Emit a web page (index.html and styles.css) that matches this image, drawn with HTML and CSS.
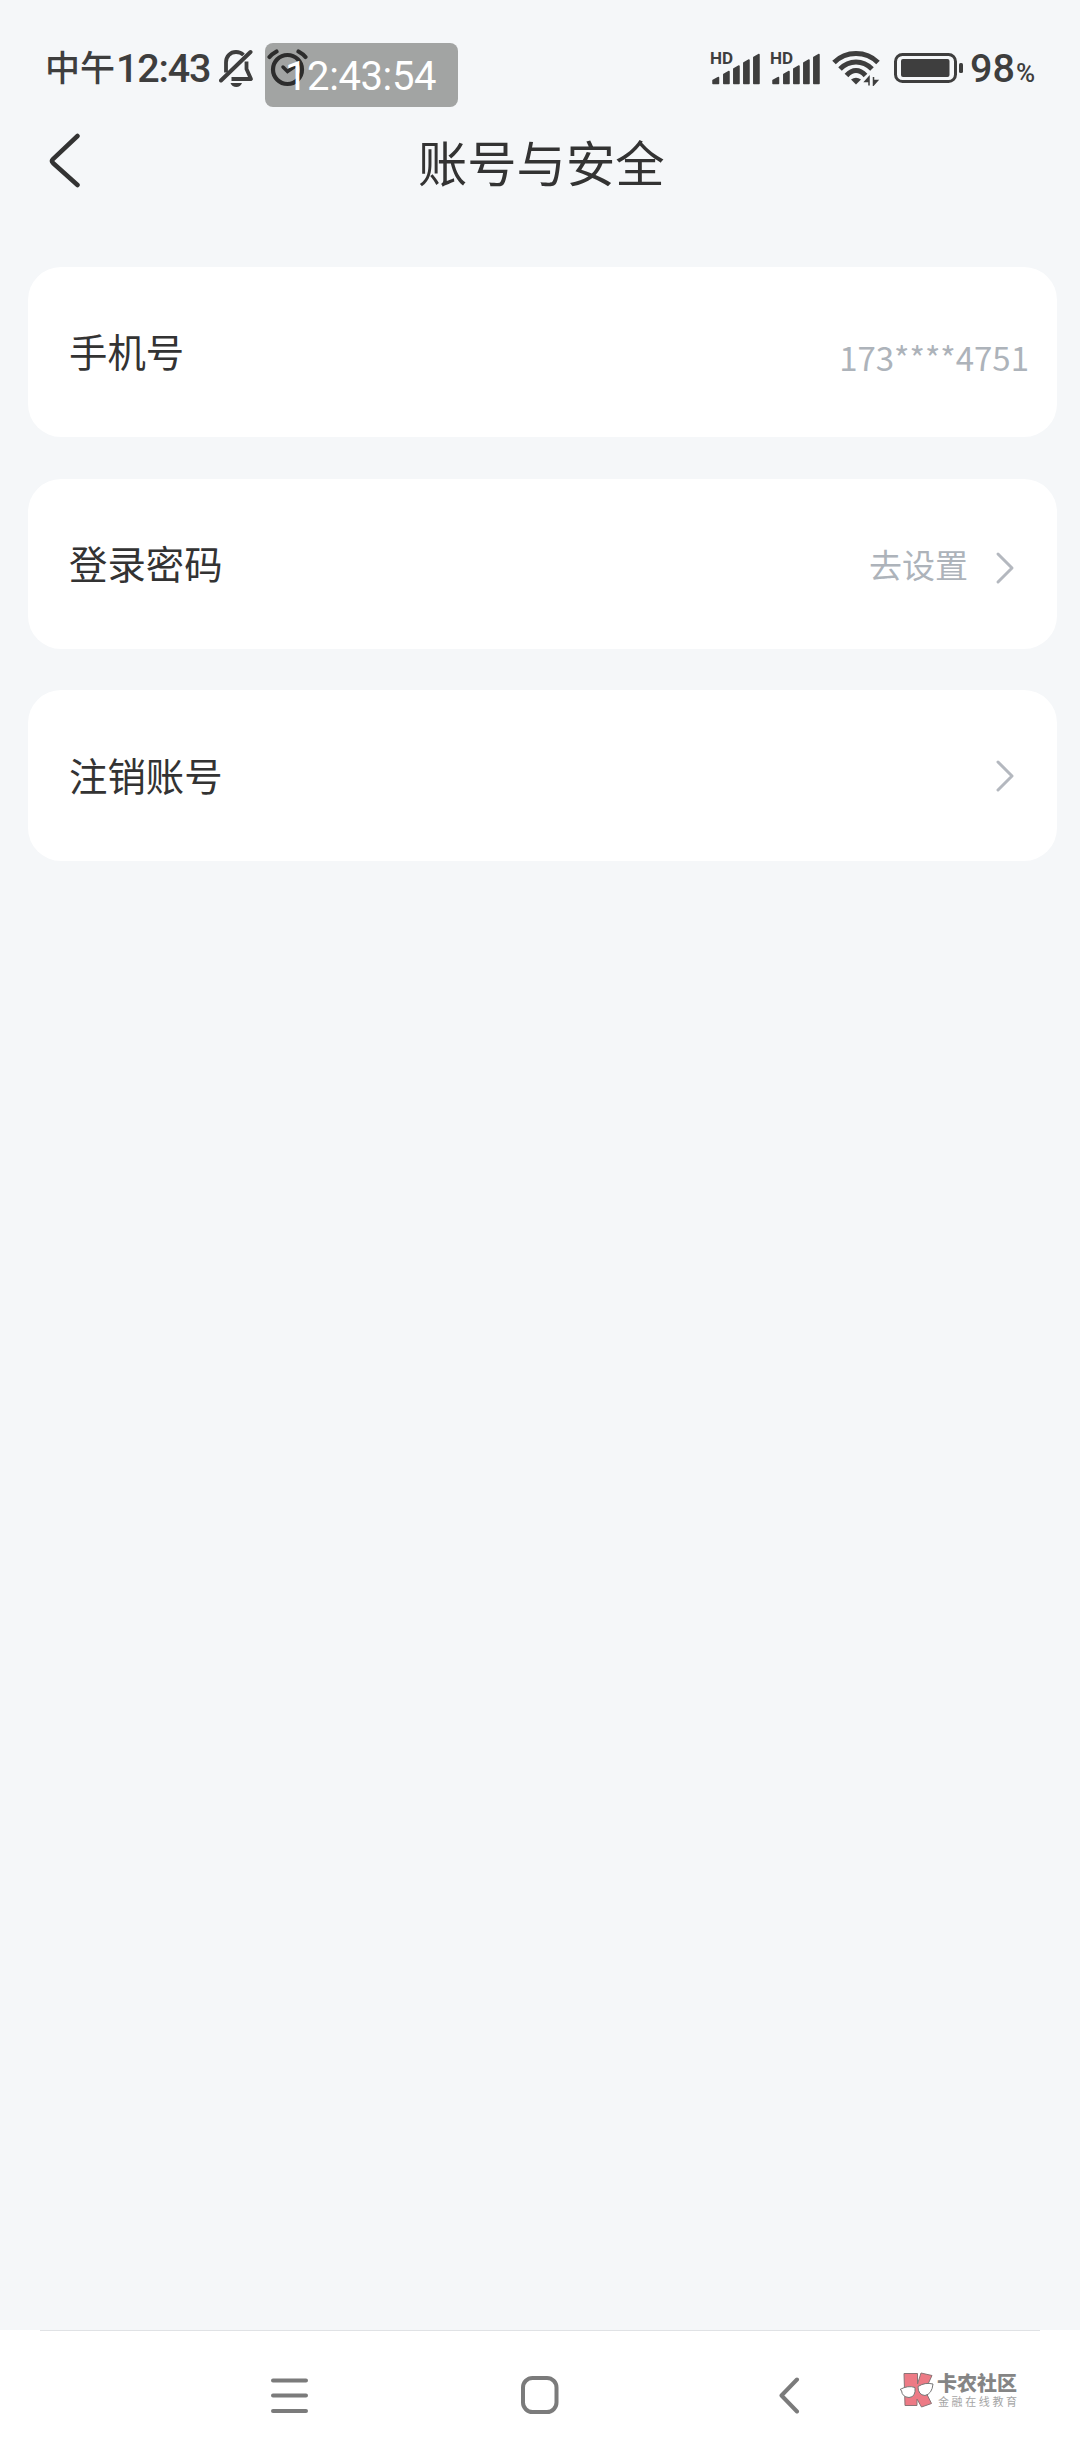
FILE: index.html
```html
<!DOCTYPE html>
<html lang="zh-CN">
	<head>
		<meta charset="utf-8" />
		<meta name="viewport" content="width=device-width, initial-scale=1" />
		<title>账号与安全</title>
		<link rel="stylesheet" href="styles.css">
	</head>

	<body>
		<div class="status-bar">
			<span class="status-period">中午</span>
			<span class="status-time">12:43</span>
			<svg class="icon-mute" width="36" height="40" viewBox="0 0 36 40">
				<g fill="none" stroke="#3e3e3e" stroke-width="3.8">
					<path d="M7 23.500V13.500C7 7 11.500 3 17 3C20 3 22.500 4 24.500 6" />
					<path d="M27.500 12.500V20L32 30H12.500" stroke-linejoin="round" />
					<path d="M2 31.500L31.500 3" stroke-linecap="round" stroke-width="4" />
				</g>
				<path d="M11.500 34H23C22 36.500 20 38 17.300 38C14.500 38 12.500 36.500 11.500 34Z" fill="#3e3e3e" />
			</svg>
			<div class="clock-badge">
				<svg class="icon-alarm" width="42" height="38" viewBox="0 0 42 38">
					<g fill="none" stroke="#2c2c2c" stroke-width="4.2" stroke-linecap="round">
						<circle cx="21.500" cy="20.500" r="14.500" />
						<path d="M3.500 8Q6 5 10.500 2.500M32.500 2.500Q37 5 39.500 8" />
						<path d="M17 18L21.500 22.500L28 18" stroke-width="3.5" />
					</g>
				</svg>
				<span class="clock-text">12:43:54</span>
			</div>
			<div class="status-right">
				<div class="signal">
					<span class="hd">HD</span>
					<svg width="52" height="34" viewBox="0 0 52 34">
						<path d="M2 29.500L7.500 26.500V32.500H2ZM12.800 23.500L18 20.500V32.500H12.800ZM22.800 18L28 15V32.500H22.800ZM32.800 12L38 9V32.500H32.800ZM42.800 6.500L48 3.500V32.500H42.800Z" />
					</svg>
				</div>
				<div class="signal">
					<span class="hd">HD</span>
					<svg width="52" height="34" viewBox="0 0 52 34">
						<path d="M2 29.500L7.500 26.500V32.500H2ZM12.800 23.500L18 20.500V32.500H12.800ZM22.800 18L28 15V32.500H22.800ZM32.800 12L38 9V32.500H32.800ZM42.800 6.500L48 3.500V32.500H42.800Z" />
					</svg>
				</div>
				<svg class="icon-wifi" width="48" height="36" viewBox="0 0 48 36">
					<g fill="none" stroke="#3e3e3e" stroke-width="5">
						<path d="M2 12.500Q11 3.500 24 3.500Q37 3.500 46 12.500" />
						<path d="M8 19Q15 12 24 12Q33 12 40 19" />
						<path d="M14.500 25.500Q19 20.500 24 20.500Q29 20.500 33.500 25.500" />
					</g>
					<path d="M19 29.500Q24 26 29 29.500L24 34.500Z" fill="#3e3e3e" />
					<path d="M37 35.500V27L33 31.500H37M41.500 27V35L45.500 30.500H41.500" fill="#3e3e3e" stroke="#3e3e3e" stroke-width="1.5" />
				</svg>
				<svg class="icon-battery" width="70" height="30" viewBox="0 0 70 30">
					<rect x="1.500" y="1.500" width="60" height="27" rx="7" fill="none" stroke="#3e3e3e" stroke-width="3" />
					<rect x="7" y="6" width="48.500" height="18" rx="2" fill="#3e3e3e" />
					<rect x="65" y="10" width="4" height="10" rx="1.500" fill="#3e3e3e" />
				</svg>
				<span class="battery-level">98</span>
				<span class="battery-unit">%</span>
			</div>
		</div>

		<div class="header">
			<svg class="icon-back" width="34" height="58" viewBox="0 0 34 58">
				<path d="M29.500 5L5 28Q3 30 5 32L29.500 54" fill="none" stroke="#333" stroke-width="4.5" stroke-linecap="round" />
			</svg>
			<h1>账号与安全</h1>
		</div>

		<div class="list">
			<div class="row">
				<span class="label">手机号</span>
				<span class="phone">173****4751</span>
			</div>
			<div class="row">
				<span class="label">登录密码</span>
				<span class="value">去设置</span>
				<svg class="arrow" width="20" height="34" viewBox="0 0 20 34">
					<path d="M3 3L17 17L3 31" />
				</svg>
			</div>
			<div class="row last">
				<span class="label">注销账号</span>
				<svg class="arrow" width="20" height="34" viewBox="0 0 20 34">
					<path d="M3 3L17 17L3 31" />
				</svg>
			</div>
		</div>

		<div class="nav-bar">
			<svg class="nav-menu" width="38" height="38" viewBox="0 0 38 38">
				<path d="M2 4.500H35M2 19.500H35M2 35H35" />
			</svg>
			<svg class="nav-home" width="38" height="38" viewBox="0 0 38 38">
				<rect x="2" y="2" width="33.5" height="34" rx="9.500" />
			</svg>
			<svg class="nav-back" width="22" height="38" viewBox="0 0 22 38">
				<path d="M18 3.500L2.500 19.500L18 35.500" />
			</svg>
			<div class="brand">
				<svg width="35" height="36" viewBox="0 0 35 36">
					<path d="M5 1.500H18.500V12L22 1L33 3.500L26 18.500L32.500 31.500L22.500 35L18 27V33.500H6Z" fill="#ed7a85" stroke="#8b7476" stroke-width="1" />
					<g fill="#fff" stroke="#777" stroke-width="1">
						<path d="M1 17.500Q9 13 16 15.500Q17 25 10 25.500Q3 25 2.500 18.500Z" />
						<path d="M19 14.500Q26 10 34 12Q33 22 26 23.500Q19 23 19 14.500Z" />
					</g>
				</svg>
				<div class="brand-text">
					<span class="brand-name">卡农社区</span>
					<span class="brand-sub">金融在线教育</span>
				</div>
			</div>
		</div>
	</body>
</html>
```

FILE: styles.css
```css
* {
	box-sizing: border-box;
}

body {
	margin: 0;
	height: 2460px;
	display: flex;
	flex-direction: column;
	background: #f5f7f9;
	color: #333;
	font-family: "Noto Sans CJK SC", sans-serif;
}

svg {
	display: block;
	flex: none;
}

span {
	white-space: nowrap;
}

/* status bar */
.status-bar {
	display: flex;
	align-items: flex-start;
	height: 120px;
	padding: 43px 42px 0 45px;
	color: #3e3e3e;
	font-family: Roboto, "Noto Sans CJK SC", sans-serif;
	font-weight: 500;
}

.status-period {
	width: 71px;
	font-size: 35px;
	line-height: 54px;
}

.status-time {
	width: 103px;
	font-size: 39.5px;
	line-height: 51px;
	letter-spacing: -1.2px;
}

.icon-mute {
	margin-top: 6px;
}

.clock-badge {
	position: relative;
	width: 193px;
	height: 64px;
	margin-left: 10px;
	padding-left: 20px;
	background: #a2a4a3;
	border-radius: 8px;
}

.icon-alarm {
	position: absolute;
	left: 1px;
	top: 6px;
}

.clock-text {
	position: relative;
	color: #fff;
	font-size: 40px;
	font-weight: 400;
	letter-spacing: -0.4px;
	line-height: 67px;
}

.status-right {
	display: flex;
	margin-left: auto;
}

.signal {
	position: relative;
	width: 60px;
	padding-top: 8px;
}

.signal path {
	fill: #3e3e3e;
	stroke: #3e3e3e;
	stroke-width: 1.5;
	stroke-linejoin: round;
}

.hd {
	position: absolute;
	left: -1px;
	top: 5px;
	font-size: 17px;
	font-weight: 700;
	line-height: 20px;
}

.icon-wifi {
	margin: 7px 0 0 1px;
}

.icon-battery {
	margin: 10px 0 0 14px;
}

.battery-level {
	width: 46px;
	margin-left: 6px;
	font-size: 39.5px;
	line-height: 51px;
}

.battery-unit {
	width: 22px;
	font-size: 26px;
	line-height: 60px;
}

/* page header */
.header {
	display: flex;
	align-items: flex-start;
	height: 147px;
	padding: 11px 0 0 48px;
}

.header h1 {
	margin: -6px 0 0 336px;
	font-size: 49.3px;
	font-weight: 400;
	line-height: 72px;
}

/* settings list */
.list {
	display: flex;
	flex: 1;
	flex-direction: column;
	gap: 41.5px;
	padding: 0 23px 0 28px;
}

.row {
	display: flex;
	align-items: center;
	height: 170px;
	padding: 0 41px;
	background: #fff;
	border-radius: 33px;
}

.row.last {
	height: 171px;
}

.label {
	margin: -4px auto 0 0;
	font-size: 38.4px;
	line-height: 56px;
}

.phone {
	margin: 9px -13px 0 0;
	color: #adb3ba;
	font-size: 33px;
}

.value {
	color: #adb3ba;
	font-size: 33px;
}

.arrow {
	margin: 8px 1px 0 27px;
	fill: none;
	stroke: #b4b8bf;
	stroke-width: 3;
	stroke-linecap: round;
	stroke-linejoin: round;
}

.last .arrow {
	margin-top: 0;
}

/* system navigation */
.nav-bar {
	display: flex;
	align-items: flex-start;
	height: 130px;
	padding: 46px 0 0 271px;
	background: linear-gradient(#e0e2e5, #e0e2e5) 40px 0 / 1000px 1px no-repeat #fff;
}

.nav-bar > svg {
	fill: none;
	stroke: #7b7b7b;
	stroke-width: 4;
	stroke-linecap: round;
	stroke-linejoin: round;
}

.nav-home {
	margin-left: 212px;
}

.nav-back {
	margin-left: 220px;
}

.brand {
	display: flex;
	margin: -4px 0 0 98px;
}

.brand-text {
	display: flex;
	flex-direction: column;
	padding-left: 3px;
	color: #858585;
}

.brand-name {
	font-size: 20px;
	font-weight: 900;
	line-height: 22px;
}

.brand-sub {
	padding-left: 1px;
	color: #a5a5a5;
	font-size: 11px;
	letter-spacing: 2.6px;
	line-height: 14px;
}
```
